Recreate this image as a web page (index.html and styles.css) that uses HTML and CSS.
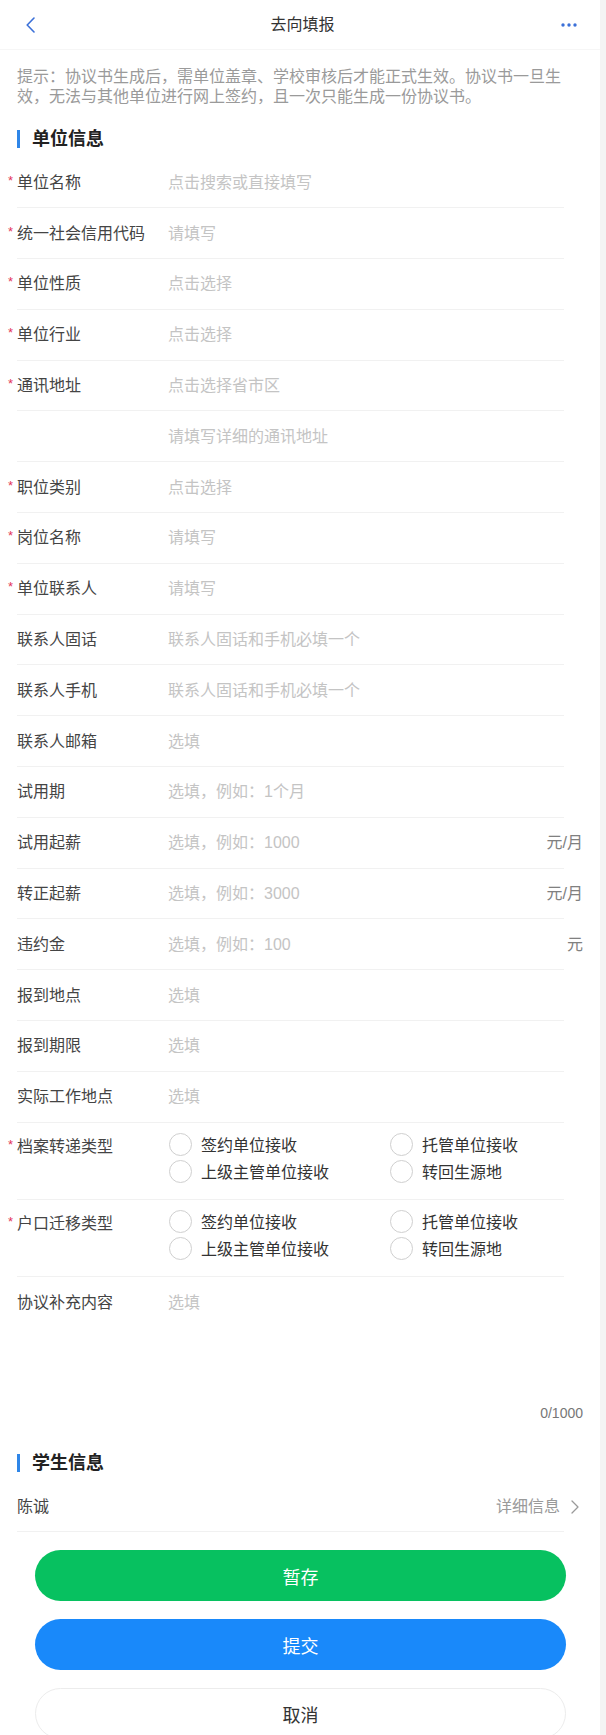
FILE: index.html
```html
<!DOCTYPE html>
<html lang="zh-CN">
  <head>
    <meta charset="UTF-8" />
    <meta name="viewport" content="width=device-width, initial-scale=1.0" />
    <title>去向填报</title>
    <link rel="stylesheet" href="styles.css">
  </head>
  <body>
    <div class="page">
      <header class="nav-bar">
        <button class="nav-back" type="button" aria-label="返回">
          <svg width="10" height="16" viewBox="0 0 10 16"><path d="M8 1 L1.2 8 L8 15" fill="none" stroke="#3b70d8" stroke-width="1.6" stroke-linecap="round" stroke-linejoin="round"/></svg>
        </button>
        <h1 class="nav-title">去向填报</h1>
        <button class="nav-more" type="button" aria-label="更多">
          <svg width="18" height="4" viewBox="0 0 18 4"><circle cx="2" cy="2" r="1.7" fill="#3b70d8"/><circle cx="8" cy="2" r="1.7" fill="#3b70d8"/><circle cx="14" cy="2" r="1.7" fill="#3b70d8"/></svg>
        </button>
      </header>

      <p class="hint">提示：协议书生成后，需单位盖章、学校审核后才能正式生效。协议书一旦生效，无法与其他单位进行网上签约，且一次只能生成一份协议书。</p>

      <h2 class="section-title">单位信息</h2>
      <form class="form" id="unitForm">
        <div class="field">
          <label class="field-label"><span class="req">*</span>单位名称</label>
          <input class="field-input" type="text" placeholder="点击搜索或直接填写" />
        </div>
        <div class="field">
          <label class="field-label"><span class="req">*</span>统一社会信用代码</label>
          <input class="field-input" type="text" placeholder="请填写" />
        </div>
        <div class="field">
          <label class="field-label"><span class="req">*</span>单位性质</label>
          <input class="field-input" type="text" placeholder="点击选择" readonly />
        </div>
        <div class="field">
          <label class="field-label"><span class="req">*</span>单位行业</label>
          <input class="field-input" type="text" placeholder="点击选择" readonly />
        </div>
        <div class="field">
          <label class="field-label"><span class="req">*</span>通讯地址</label>
          <input class="field-input" type="text" placeholder="点击选择省市区" readonly />
        </div>
        <div class="field">
          <label class="field-label"></label>
          <input class="field-input" type="text" placeholder="请填写详细的通讯地址" />
        </div>
        <div class="field">
          <label class="field-label"><span class="req">*</span>职位类别</label>
          <input class="field-input" type="text" placeholder="点击选择" readonly />
        </div>
        <div class="field">
          <label class="field-label"><span class="req">*</span>岗位名称</label>
          <input class="field-input" type="text" placeholder="请填写" />
        </div>
        <div class="field">
          <label class="field-label"><span class="req">*</span>单位联系人</label>
          <input class="field-input" type="text" placeholder="请填写" />
        </div>
        <div class="field">
          <label class="field-label">联系人固话</label>
          <input class="field-input" type="text" placeholder="联系人固话和手机必填一个" />
        </div>
        <div class="field">
          <label class="field-label">联系人手机</label>
          <input class="field-input" type="text" placeholder="联系人固话和手机必填一个" />
        </div>
        <div class="field">
          <label class="field-label">联系人邮箱</label>
          <input class="field-input" type="email" placeholder="选填" />
        </div>
        <div class="field">
          <label class="field-label">试用期</label>
          <input class="field-input" type="text" placeholder="选填，例如：1个月" />
        </div>
        <div class="field">
          <label class="field-label">试用起薪</label>
          <input class="field-input" type="text" placeholder="选填，例如：1000" />
          <span class="unit">元/月</span>
        </div>
        <div class="field">
          <label class="field-label">转正起薪</label>
          <input class="field-input" type="text" placeholder="选填，例如：3000" />
          <span class="unit">元/月</span>
        </div>
        <div class="field">
          <label class="field-label">违约金</label>
          <input class="field-input" type="text" placeholder="选填，例如：100" />
          <span class="unit">元</span>
        </div>
        <div class="field">
          <label class="field-label">报到地点</label>
          <input class="field-input" type="text" placeholder="选填" />
        </div>
        <div class="field">
          <label class="field-label">报到期限</label>
          <input class="field-input" type="text" placeholder="选填" />
        </div>
        <div class="field">
          <label class="field-label">实际工作地点</label>
          <input class="field-input" type="text" placeholder="选填" />
        </div>

        <div class="field field-radio">
          <label class="field-label"><span class="req">*</span>档案转递类型</label>
          <div class="radio-group">
            <label class="radio"><span class="radio-icon"></span>签约单位接收</label>
            <label class="radio"><span class="radio-icon"></span>托管单位接收</label>
            <label class="radio"><span class="radio-icon"></span>上级主管单位接收</label>
            <label class="radio"><span class="radio-icon"></span>转回生源地</label>
          </div>
        </div>
        <div class="field field-radio">
          <label class="field-label"><span class="req">*</span>户口迁移类型</label>
          <div class="radio-group">
            <label class="radio"><span class="radio-icon"></span>签约单位接收</label>
            <label class="radio"><span class="radio-icon"></span>托管单位接收</label>
            <label class="radio"><span class="radio-icon"></span>上级主管单位接收</label>
            <label class="radio"><span class="radio-icon"></span>转回生源地</label>
          </div>
        </div>

        <div class="field field-textarea">
          <label class="field-label">协议补充内容</label>
          <div class="textarea-wrap">
            <textarea placeholder="选填" maxlength="1000"></textarea>
            <div class="count">0/1000</div>
          </div>
        </div>
      </form>

      <h2 class="section-title section-title-student">学生信息</h2>
      <div class="form">
        <div class="field student-row">
          <span class="student-name">陈诚</span>
          <a class="detail-link" href="#">详细信息
            <svg width="8" height="14" viewBox="0 0 8 14"><path d="M1 1 L7 7 L1 13" fill="none" stroke="#9a9a9a" stroke-width="1.3" stroke-linecap="round" stroke-linejoin="round"/></svg>
          </a>
        </div>
      </div>

      <div class="actions">
        <button class="btn btn-save" type="button">暂存</button>
        <button class="btn btn-submit" type="submit" form="unitForm">提交</button>
        <button class="btn btn-cancel" type="button">取消</button>
      </div>
    </div>
  </body>
</html>
```

FILE: styles.css
```css
* {
  margin: 0;
  padding: 0;
  box-sizing: border-box;
}

body {
  font-family: "Liberation Sans", "Noto Sans CJK SC", sans-serif;
  background: #f4f4f4;
  color: #333;
}

.page {
  width: 600px;
  min-height: 100vh;
  background: #fff;
  padding-bottom: 40px;
}

/* top bar */
.nav-bar {
  height: 50px;
  display: grid;
  grid-template-columns: 1fr auto 1fr;
  align-items: center;
  padding: 0 21px 0 26px;
  border-bottom: 1px solid #f6f6f6;
}

.nav-back,
.nav-more {
  border: none;
  background: none;
  display: flex;
  cursor: pointer;
}

.nav-more {
  justify-self: end;
}

.nav-title {
  font-size: 16px;
  font-weight: normal;
  line-height: 20px;
  color: #333;
}

.hint {
  padding: 17px 36px 0 17px;
  font-size: 16px;
  line-height: 20px;
  color: #9a9a9a;
}

.section-title {
  display: flex;
  align-items: center;
  gap: 12px;
  height: 24px;
  margin: 20px 0 6.5px 17px;
  font-size: 18px;
  line-height: 24px;
  font-weight: bold;
  color: #222;
}

.section-title::before {
  content: "";
  width: 3px;
  height: 18px;
  background: #2f86e8;
}

.section-title-student {
  margin-top: 28px;
}

/* form rows */
.form {
  padding: 0 17px;
}

.field {
  display: flex;
  align-items: center;
  height: 50.8px;
  background: linear-gradient(#f1f1f1, #f1f1f1) left bottom / calc(100% - 19px) 1px no-repeat;
}

.field-label {
  flex: none;
  width: 151px;
  font-size: 16px;
  line-height: 20px;
  color: #444;
}

.req {
  display: inline-block;
  width: 9px;
  margin-left: -9px;
  font-size: 13px;
  line-height: 16px;
  vertical-align: top;
  color: #e3345a;
}

.field-input {
  flex: 1;
  min-width: 0;
  border: none;
  outline: none;
  background: transparent;
  font-family: inherit;
  font-size: 16px;
  line-height: 20px;
  color: #333;
}

.field-input::placeholder,
.field-textarea textarea::placeholder {
  color: #c4c4c4;
}

.unit {
  flex: none;
  font-size: 16px;
  line-height: 20px;
  color: #808080;
}

/* radio rows */
.field-radio {
  height: auto;
  align-items: flex-start;
  padding: 8px 0 15px;
}

.field-radio .field-label {
  margin-top: 6px;
}

.radio-group {
  flex: 1;
  display: grid;
  grid-template-columns: 221px 1fr;
  padding-left: 1px;
}

.radio {
  display: flex;
  align-items: center;
  gap: 9px;
  height: 27px;
  font-size: 16px;
  color: #333;
}

.radio-icon {
  flex: none;
  width: 23px;
  height: 23px;
  border: 1px solid #cfcfcf;
  border-radius: 50%;
}

/* textarea */
.field-textarea {
  height: auto;
  align-items: flex-start;
  padding-top: 16.3px;
  background: none;
}

.textarea-wrap {
  flex: 1;
  display: flex;
  flex-direction: column;
}

.field-textarea textarea {
  height: 100px;
  border: none;
  outline: none;
  resize: none;
  font-family: inherit;
  font-size: 16px;
  line-height: 20px;
  color: #333;
}

.count {
  margin-top: 10px;
  text-align: right;
  font-size: 14px;
  line-height: 20px;
  color: #777;
}

/* student */
.student-row {
  justify-content: space-between;
}

.student-name {
  font-size: 16px;
  line-height: 20px;
  color: #444;
}

.detail-link {
  display: flex;
  align-items: center;
  gap: 11px;
  padding-right: 4px;
  font-size: 16px;
  line-height: 20px;
  color: #9a9a9a;
  text-decoration: none;
}

/* buttons */
.actions {
  display: flex;
  flex-direction: column;
  gap: 18px;
  padding: 18px 34px 0 35px;
}

.btn {
  height: 51px;
  border: none;
  border-radius: 26px;
  font-family: inherit;
  font-size: 18px;
  color: #fff;
  cursor: pointer;
}

.btn-save {
  background: #07c160;
}

.btn-submit {
  background: #1989fa;
}

.btn-cancel {
  background: #fff;
  color: #333;
  border: 1px solid #ececec;
}
```
